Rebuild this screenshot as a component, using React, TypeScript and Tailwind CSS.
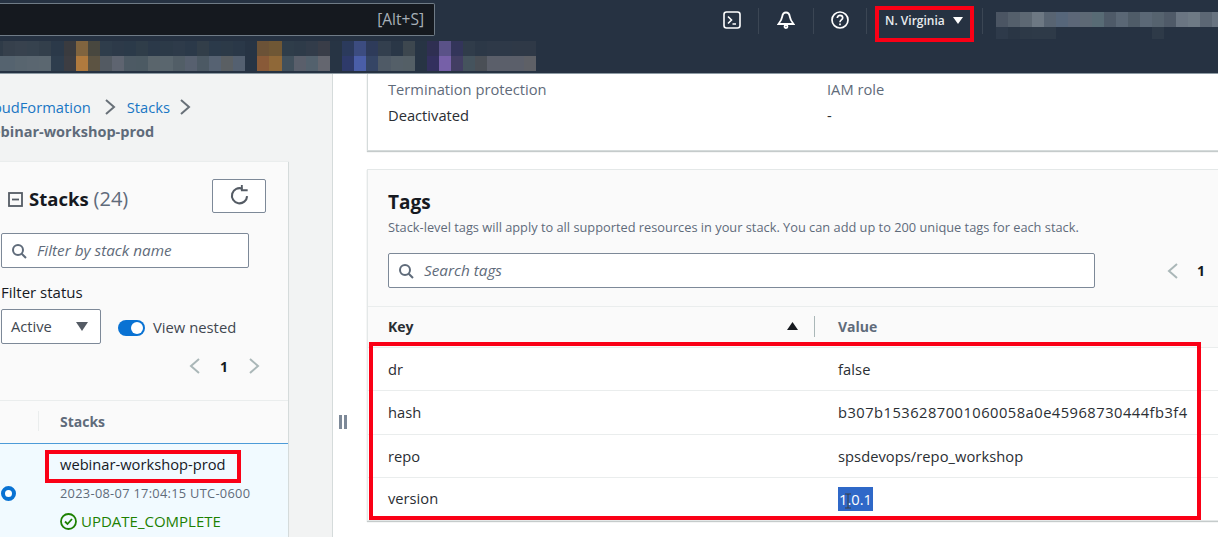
import React from "react";

const blurCols: [string, string][] = [
  ["#2f3b48", "#55636f"], ["#36404c", "#55636f"], ["#38424e", "#58656f"], ["#36424e", "#5a6670"], ["#333f4b", "#5b6770"],
  ["#2b3949", "#2e3d4d"], ["#3a3b3f", "#3d3d42"], ["#80643f", "#b07a3e"], ["#48473f", "#5c5342"], ["#2f3d4b", "#535a62"],
  ["#2d3a49", "#5e6470"], ["#2b3a49", "#4d5a64"], ["#2f3d49", "#4c5a63"], ["#2b3949", "#5a656c"], ["#2c3a48", "#5a666e"],
  ["#2e3b4a", "#525e67"], ["#2b3949", "#57606f"], ["#323e49", "#4c5964"], ["#2b3a4a", "#566272"], ["#2c3a48", "#5a5f63"],
  ["#2a3848", "#546070"], ["#273444", "#273444"], ["#6b5237", "#895a38"], ["#6f5735", "#8f6838"], ["#2f3d4a", "#41505c"],
  ["#2e3b49", "#5a5f6b"], ["#323c4a", "#53616d"], ["#393d48", "#64666f"], ["#273444", "#273444"], ["#2b3a5c", "#2e3a6a"],
  ["#3c4c80", "#4a5ea8"], ["#2e3b5a", "#354565"], ["#333f4e", "#4f5a66"], ["#2a3747", "#545f68"], ["#3d474f", "#545f66"],
  ["#273444", "#273444"], ["#2f2f52", "#33305e"], ["#5a5288", "#7660a8"], ["#33355a", "#423e63"], ["#303c4a", "#45535d"],
  ["#2c3847", "#4a4f56"], ["#2e3948", "#5b5f6a"], ["#2e3948", "#5b5f6a"], ["#2f3947", "#5b5f6a"], ["#2f3947", "#5e6066"],
];

const accountCols: [string, string][] = [
  ["#4b5563", "#2e3a4a"], ["#545f6b", "#2a3645"], ["#5d6873", "#2d3947"], ["#6d7883", "#2e3a48"], ["#586472", "#2e3a48"],
  ["#56667a", "#263242"], ["#5c6778", "#263242"], ["#5d6975", "#263242"], ["#586b75", "#263242"], ["#4e5a68", "#263242"],
  ["#5a6775", "#263242"], ["#4f5c68", "#263242"], ["#5b6876", "#263242"], ["#56636f", "#2e3a48"], ["#4f5a68", "#263242"],
  ["#6a7582", "#263242"], ["#6e7a85", "#263242"], ["#5c6774", "#263242"], ["#687380", "#263242"],
];

const rows = [
  { k: "dr", v: "false", h: "h-[43px] pt-[1px]", t: "tracking-[0.1px]" },
  { k: "hash", v: "b307b1536287001060058a0e45968730444fb3f4", h: "h-[44px] pb-[1px]", t: "tracking-[0.48px]" },
  { k: "repo", v: "spsdevops/repo_workshop", h: "h-[43px] pt-[1px]", t: "tracking-[0.05px]" },
];

function SearchIcon() {
  return (
    <svg width="16" height="16" viewBox="0 0 16 16" fill="none" stroke="#5f6b7a" strokeWidth="2" className="shrink-0">
      <circle cx="7" cy="7" r="5" />
      <path d="M10.7 10.7 15 15" />
    </svg>
  );
}

function Chevron({ dir, color = "#aab7b8" }: { dir: "l" | "r"; color?: string }) {
  return (
    <svg width="13" height="18" viewBox="0 0 13 18" fill="none" stroke={color} strokeWidth="2">
      <path d={dir === "l" ? "M11 2 3 9l8 7" : "M2 2l8 7-8 7"} />
    </svg>
  );
}

function Sep() {
  return <div className="w-px h-[26px] bg-[#3b4654]" />;
}

export default function App() {
  return (
    <div className="relative w-[1218px] h-[537px] overflow-hidden bg-white font-['Open_Sans','Liberation_Sans',sans-serif] text-[#16191f]">
      {/* Top bar */}
      <header className="h-[74px] bg-[#263242] border-b border-[#8d9aa3] flex flex-col">
        <div className="flex h-[41px] shrink-0">
          <div className="w-[435px] h-[33px] mt-[3px] bg-[#15191f] border border-l-0 border-[#6f7b86] rounded-r-[2px] flex items-center justify-end pr-[10px] shrink-0">
            <span className="text-[15.500px] text-[#a8b0b8]">[Alt+S]</span>
          </div>
          <div className="w-[288px] shrink-0" />
          <div className="flex items-start shrink-0 pt-[11px]">
            <svg width="18" height="18" viewBox="0 0 18 18" fill="none" stroke="#fff" strokeWidth="1.6" className="shrink-0">
              <rect x="1" y="1" width="16" height="16" rx="2.5" />
              <path d="M5 5.500 8.500 9 5 12.500M9.500 13H13" />
            </svg>
            <div className="ml-[17px] -mt-[3px]"><Sep /></div>
            <svg width="18" height="18" viewBox="0 0 18 18" fill="none" stroke="#fff" strokeWidth="1.8" className="ml-[18px] shrink-0">
              <path d="M9 1.500c-2.600 0-3.500 2-3.800 4.200C4.900 8.400 3.500 10.500 1.500 13h15c-2-2.500-3.400-4.600-3.700-7.300C12.500 3.500 11.600 1.500 9 1.500Z" />
              <circle cx="9" cy="15.500" r="1.500" />
            </svg>
            <div className="ml-[18px] -mt-[3px]"><Sep /></div>
            <svg width="18" height="18" viewBox="0 0 18 18" fill="none" stroke="#fff" strokeWidth="1.7" className="ml-[17px] shrink-0">
              <circle cx="9" cy="9" r="8" />
              <path d="M6.300 7c0-1.700 1.200-2.700 2.700-2.700s2.700 1 2.700 2.500C11.700 9 9 8.900 9 11.200" />
              <path d="M9 12.500v1.800" />
            </svg>
            <div className="ml-[17px] -mt-[3px]"><Sep /></div>
          </div>
          <div className="w-[18px] shrink-0" />
          <div className="flex items-center h-[41px] shrink-0">
            <span className="text-[12px] font-semibold text-[#e9ecef] w-[68px] whitespace-nowrap">N. Virginia</span>
            <svg width="10" height="7" viewBox="0 0 10 7" fill="#fff"><path d="M0 0h10L5 7Z" /></svg>
          </div>
          <div className="w-[19px] shrink-0" />
          <div className="w-px h-[26px] bg-[#3b4654] mt-[8px] shrink-0" />
          <div className="flex ml-[13px] mt-[12px] shrink-0">
            {accountCols.map((c, i) => (
              <div key={i} className="w-[12px] flex flex-col shrink-0">
                <div className="h-[15px]" style={{ background: c[0] }} />
                <div className="h-[12px]" style={{ background: c[1] }} />
              </div>
            ))}
          </div>
        </div>
        <div className="flex h-[30px] shrink-0">
          {blurCols.map((c, i) => (
            <div key={i} className={i === 0 ? "w-[3px] shrink-0 flex flex-col" : "w-[12.110px] shrink-0 flex flex-col"}>
              <div className="h-[15px]" style={{ background: c[0] }} />
              <div className="h-[15px]" style={{ background: c[1] }} />
            </div>
          ))}
        </div>
      </header>

      <div className="flex h-[463px]">
        {/* Left column */}
        <aside className="w-[333px] shrink-0 bg-[#f2f3f3] border-r border-[#d5dbdb] overflow-hidden">
          <div className="h-[88px] pt-[21px] text-[14.700px] leading-[24px] whitespace-nowrap">
            <div className="flex items-center -ml-[20px] mb-[1px] text-[#1a77c4]">
              <span>CloudFormation</span>
              <span className="ml-[13px] mr-[10px] flex"><Chevron dir="r" color="#687078" /></span>
              <span>Stacks</span>
              <span className="ml-[9px] flex"><Chevron dir="r" color="#687078" /></span>
            </div>
            <div className="-ml-[8px] font-bold text-[#5f6b7a] text-[14.500px]">ebinar-workshop-prod</div>
          </div>
          <section className="w-[289px] h-[375px] bg-[#fafafa] border-r border-[#d5dbdb] shadow-[0_-1px_1px_#eaeded] overflow-hidden">
            <div className="flex justify-between h-[71px] pt-[17px] pr-[22px]">
              <div className="flex items-center h-[40px] pl-[8px]">
                <svg width="15" height="15" viewBox="0 0 15 15" fill="none" stroke="#545b64" strokeWidth="1.800">
                  <rect x="1" y="1" width="13" height="13" />
                  <path d="M4 7.500h7" />
                </svg>
                <span className="ml-[6px] text-[18.500px] font-bold text-[#16191f]">Stacks</span>
                <span className="ml-[5px] text-[20px] text-[#5f6b7a]">(24)</span>
              </div>
              <div className="w-[54px] h-[34px] border border-[#7d8998] rounded-[2px] bg-white flex items-center justify-center pb-[2px]">
                <svg width="21" height="21" viewBox="0 0 18 18" fill="none" stroke="#545b64" strokeWidth="1.800">
                  <path d="M15.500 9.500A6.500 6.500 0 1 1 11.500 3.200" />
                  <path d="M11 0v4.500h5" strokeWidth="1.600" />
                </svg>
              </div>
            </div>
            <div className="ml-[1px] w-[248px] h-[35px] bg-white border border-[#7d8998] rounded-[2px] flex items-center pl-[9px]">
              <SearchIcon />
              <span className="ml-[10px] text-[15.300px] italic text-[#5f6b7a]">Filter by stack name</span>
            </div>
            <div className="ml-[1px] mt-[13px] h-[22px] text-[15px] leading-[22px]">Filter status</div>
            <div className="flex mt-[6px] ml-[1px] h-[35px]">
              <div className="w-[100px] h-[35px] bg-white border border-[#7d8998] rounded-[2px] flex items-center justify-between pl-[9px] pr-[12px]">
                <span className="text-[14.700px] text-[#414750]">Active</span>
                <svg width="12" height="9" viewBox="0 0 12 9" fill="#545b64"><path d="M0 0h12L6 9Z" /></svg>
              </div>
              <div className="ml-[17px] flex items-center h-[35px]">
                <div className="w-[27px] h-[16px] rounded-full bg-[#0972d3] relative mt-[2px]">
                  <div className="absolute right-[2px] top-[2px] w-[12px] h-[12px] rounded-full bg-white" />
                </div>
                <span className="ml-[8px] mt-[1px] text-[14.800px] text-[#414750]">View nested</span>
              </div>
            </div>
            <div className="flex items-center h-[22px] mt-[11px] ml-[188px]">
              <Chevron dir="l" />
              <span className="ml-[19px] w-[7px] text-[14px] font-bold">1</span>
              <span className="ml-[21px] flex"><Chevron dir="r" /></span>
            </div>
            <div className="h-[180px] mt-[23px] border-t border-[#eaeded] flex flex-col">
              <div className="h-[42px] flex items-center shrink-0 pb-[2px]">
                <div className="w-[1px] h-[20px] bg-[#eaeded] ml-[38px]" />
                <span className="ml-[21px] text-[14px] font-bold text-[#5f6b7a]">Stacks</span>
              </div>
              <div className="flex-1 bg-[#f1faff] border-t border-[#4d9bd8] flex">
                <div className="w-[60px] shrink-0 flex items-start pt-[42px] pl-[1px]">
                  <div className="w-[15px] h-[15px] rounded-full border-[4px] border-[#0972d3] bg-white" />
                </div>
                <div className="pt-[8px] whitespace-nowrap">
                  <div className="text-[14.700px] leading-[24px] h-[24px] text-[#16191f]">webinar-workshop-prod</div>
                  <div className="mt-[7px] text-[12.800px] tracking-[0.3px] leading-[20px] text-[#5f6b7a]">2023-08-07 17:04:15 UTC-0600</div>
                  <div className="mt-[8px] flex items-center text-[15px] leading-[20px] text-[#1d8102]">
                    <svg width="17" height="17" viewBox="0 0 17 17" fill="none" stroke="#1d8102" strokeWidth="1.800">
                      <circle cx="8.500" cy="8.500" r="7.500" />
                      <path d="M5 8.500l2.500 2.500 4.500-5" />
                    </svg>
                    <span className="ml-[4px]">UPDATE_COMPLETE</span>
                  </div>
                </div>
              </div>
            </div>
          </section>
        </aside>

        {/* Handle */}
        <div className="w-[34px] shrink-0 flex justify-center pt-[341px]">
          <div className="flex gap-[2px] h-[14px] mr-[14px]">
            <div className="w-[3px] h-[14px] bg-[#7d8998]" />
            <div className="w-[3px] h-[14px] bg-[#7d8998]" />
          </div>
        </div>

        {/* Main */}
        <main className="w-[851px] shrink-0">
          <section className="h-[77px] border-l border-b border-[#d5dbdb] shadow-[0_1px_1px_#c5cbcb] bg-white pl-[20px] pt-[3px] grid grid-cols-[439px_1fr] text-[14.700px] leading-[24px]">
            <div>
              <div className="text-[#5f6b7a] h-[26px]">Termination protection</div>
              <div className="text-[#2a2e33]">Deactivated</div>
            </div>
            <div>
              <div className="text-[#5f6b7a] h-[26px]">IAM role</div>
              <div className="text-[#2a2e33]">-</div>
            </div>
          </section>
          <section className="mt-[18px] h-[352px] border-l border-b border-t border-[#e4e8e8] shadow-[0_1px_1px_#c5cbcb] bg-white">
            <div className="h-[137px] bg-[#fafafa] border-b border-[#eaeded] pl-[20px] pt-[18px]">
              <h2 className="text-[19px] leading-[28px] font-bold text-[#16191f]">Tags</h2>
              <p className="mt-[1px] text-[12.800px] leading-[20px] text-[#5f6b7a] whitespace-nowrap">
                Stack-level tags will apply to all supported resources in your stack. You can add up to 200 unique tags for each stack.
              </p>
              <div className="flex items-center mt-[16px]">
                <div className="w-[707px] h-[35px] bg-white border border-[#7d8998] rounded-[2px] flex items-center pl-[9px] shrink-0">
                  <SearchIcon />
                  <span className="ml-[10px] text-[15.300px] italic text-[#5f6b7a]">Search tags</span>
                </div>
                <span className="ml-[71px] flex"><Chevron dir="l" /></span>
                <span className="ml-[18px] text-[14px] font-bold">1</span>
              </div>
            </div>
            <div className="h-[41px] pb-[2px] bg-[#fafafa] border-b border-[#eaeded] grid grid-cols-[450px_1fr] pl-[20px] items-center text-[14px] font-bold">
              <div className="flex items-center">
                <span className="text-[#2a2e33]">Key</span>
                <svg width="11" height="8" viewBox="0 0 11 8" fill="#16191f" className="ml-[373px]"><path d="M5.500 0 11 8H0Z" /></svg>
                <div className="ml-[16px] w-px h-[21px] bg-[#aab7b8]" />
              </div>
              <span className="text-[#5f6b7a]">Value</span>
            </div>
            {rows.map((r) => (
              <div key={r.k} className={`${r.h} border-b border-[#eaeded] grid grid-cols-[450px_1fr] pl-[20px] items-center text-[14.700px] text-[#2a2e33]`}>
                <span>{r.k}</span>
                <span className={`whitespace-nowrap ${r.t}`}>{r.v}</span>
              </div>
            ))}
            <div className="h-[42px] pb-[1px] grid grid-cols-[450px_1fr] pl-[20px] items-center text-[14.700px] text-[#2a2e33]">
              <span>version</span>
              <span className="relative w-fit h-[24px] leading-[24px] bg-[#2f68c8] text-white px-px">
                1.0.1
                <svg width="8" height="16" viewBox="0 0 8 16" fill="none" stroke="#3c4043" strokeWidth="1" className="absolute left-[6px] top-[6px]">
                  <path d="M1 1h6M4 1v14M1 15h6" />
                </svg>
              </span>
            </div>
          </section>
        </main>
      </div>

      {/* Annotation boxes drawn over the screenshot */}
      <div className="absolute left-[875px] top-[6px] w-[99px] h-[36px] border-[4px] border-[#fa0016]" />
      <div className="absolute left-[45px] top-[450px] w-[196px] h-[33px] border-[4px] border-[#fa0016]" />
      <div className="absolute left-[369px] top-[342px] w-[832px] h-[178px] border-[4px] border-[#fa0016]" />
    </div>
  );
}
